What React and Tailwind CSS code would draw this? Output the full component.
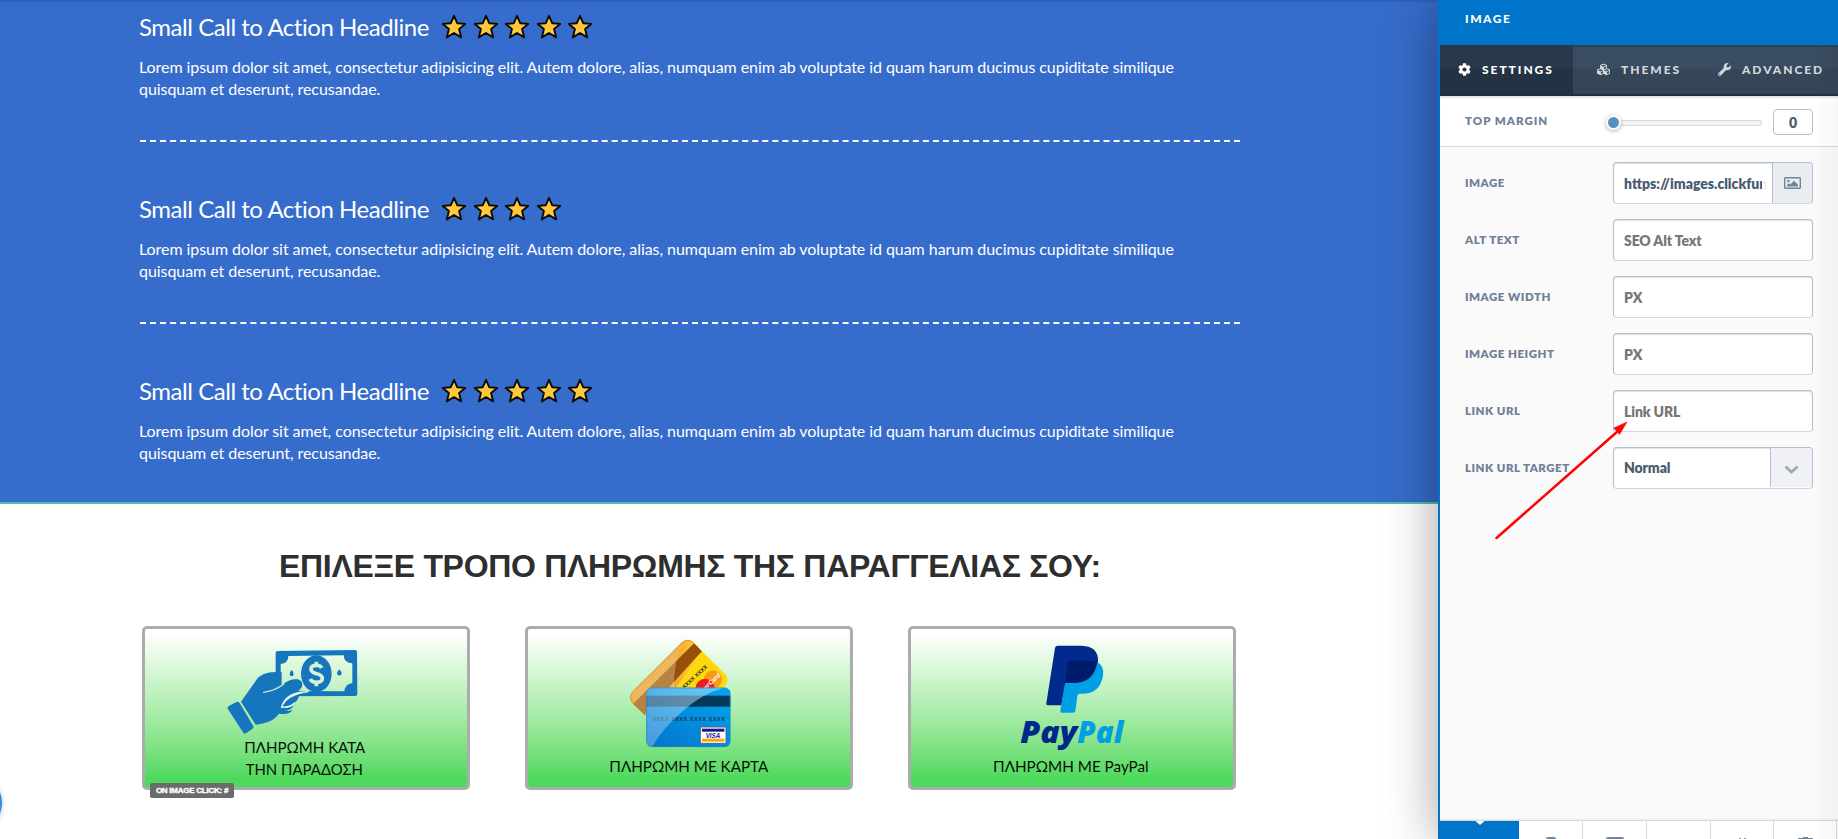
import { FaCog, FaCubes, FaWrench } from "react-icons/fa";

const LOREM =
  "Lorem ipsum dolor sit amet, consectetur adipisicing elit. Autem dolore, alias, numquam enim ab voluptate id quam harum ducimus cupiditate similique quisquam et deserunt, recusandae.";

function Star() {
  return (
    <svg className="h-[28px] w-[28px]" viewBox="0 0 28 28">
      <path
        d="M14 2.8 L17.2 10.2 L25.2 10.9 L19.1 16 L21.2 24.4 L14 20 L6.8 24.4 L8.9 16 L2.8 10.9 L10.8 10.2 Z"
        fill="#ffc83d"
        stroke="#0b0b0b"
        strokeWidth="1.9"
        strokeLinejoin="round"
      />
    </svg>
  );
}

function Review({ stars, last }) {
  return (
    <div className={last ? "h-[138px]" : "h-[182px]"}>
      <div className="flex h-[46px] items-center">
        <h3 className="-ml-px w-[301px] whitespace-nowrap pb-px text-[24px] leading-[30px] tracking-[-0.46px]">Small Call to Action Headline</h3>
        <div className="flex gap-[3.6px]">
          {Array.from({ length: stars }, (_, i) => (
            <Star key={i} />
          ))}
        </div>
      </div>
      <p className="-ml-px mt-[6px] w-[1060px] text-[16px] leading-[22px] tracking-[-0.058px]">{LOREM}</p>
      {!last && <div className="mt-[40px] border-t-2 border-dashed border-white" />}
    </div>
  );
}

function Card({ children }) {
  return (
    <div className="relative h-[164px] w-[328px] rounded-[5px] border-[3px] border-[#acacac] bg-linear-to-b from-white from-2% to-[#4dd95c] to-95%">
      <svg className="absolute -left-[3px] -top-[3px] h-[164px] w-[328px]" viewBox="0 0 984 492">
        {children}
      </svg>
    </div>
  );
}

function Caption({ x, y, w, children }) {
  return (
    <text x={x} y={y} textLength={w} lengthAdjust="spacingAndGlyphs" fontSize="46" className="font-['Lato','Open_Sans',sans-serif]" fill="#071207">
      {children}
    </text>
  );
}

function CashArt() {
  return (
    <g transform="translate(-37 -46)">
      <g fill="#1576be">
        <path fillRule="evenodd" d="M444 121 L676 118 Q682 118 682 124 L683 250 Q683 256 677 256 L444 257 Q438 257 438 251 L438 127 Q438 121 444 121 Z M476 136 Q476 158 453 160 L454 241 L644 242 Q646 220 668 217 L668 158 Q643 157 642 134 Z" />
        <ellipse cx="560" cy="189" rx="46" ry="55" />
        <path d="M486 178 Q494 186 492 192 Q486 202 480 192 Q478 186 486 178Z M629 176 Q637 184 636 190 Q629 199 622 190 Q621 184 629 176Z" />
        <path d="M302 284 L320 274 Q326 271 330 277 L371 347 Q373 351 369 354 L350 367 Q345 371 341 366 L294 294 Q292 289 302 284Z" />
        <path d="M334 273 L380 208 Q396 184 438 184 L456 184 L456 236 L500 246 L508 256 Q503 275 484 284 Q460 292 440 318 Q424 336 378 342 Z" />
        <path d="M450 293 Q482 294 492 283 Q488 297 468 301 Q486 300 488 297 Q482 314 446 309 Q453 304 450 293Z" />
      </g>
      <path d="M402 243 Q438 240 465 217 Q483 203 505 206 Q522 212 517 228 Q507 247 475 252 Q465 265 455 290 L400 270 Z" fill="#1576be" />
      <path d="M402 245 Q438 240 462 220" fill="none" stroke="#c6eec8" strokeWidth="4" strokeLinecap="round" />
      <path d="M455 291 Q470 251 536 243 L512 245 Q466 251 455 291 M456 290 Q485 290 495 276" fill="none" stroke="#ecfaec" strokeWidth="4" />
      <path d="M576 172 Q573 164 560 164 Q544 164 544 175 Q544 185 561 189 Q578 193 578 203 Q578 215 560 215 Q546 215 542 205 M560 153 L560 166 M560 213 L560 227" fill="none" stroke="#d4f3d4" strokeWidth="11" />
    </g>
  );
}

function CreditArt() {
  return (
    <g transform="translate(-30 -46)">
      <defs>
        <linearGradient id="gold" x1="0" y1="0" x2="1" y2="0">
          <stop offset="0" stopColor="#f0a03a" />
          <stop offset="0.55" stopColor="#fbbf2c" />
          <stop offset="1" stopColor="#ffe600" />
        </linearGradient>
        <linearGradient id="blue" x1="0" y1="1" x2="1" y2="0">
          <stop offset="0" stopColor="#0573c9" />
          <stop offset="1" stopColor="#00a6f0" />
        </linearGradient>
        <linearGradient id="gloss" x1="0" y1="1" x2="1" y2="0">
          <stop offset="0" stopColor="#a5d4f5" stopOpacity="0.4" />
          <stop offset="1" stopColor="#c8e6fb" stopOpacity="0.55" />
        </linearGradient>
        <clipPath id="goldClip">
          <path d="M502 95 Q518 82 536 96 L630 190 Q643 205 634 220 L620 240 L440 340 L391 314 L352 276 Q341 260 352 245 Z" />
        </clipPath>
      </defs>
      <g clipPath="url(#goldClip)">
        <rect x="340" y="80" width="310" height="270" fill="#ffd90d" />
        <path d="M340 80 L506 80 Q470 150 474 235 L474 340 L340 340Z" fill="#f5a93b" />
        <path d="M480 80 L530 80 L560 125 L480 235 L474 340 Z" fill="url(#gold)" />
        <path d="M538 97 L561 122 L385 314 L354 280 Z" fill="#97500b" />
        <path d="M340 80 L508 80 Q474 150 476 250 L340 340Z" fill="#e5c78e" opacity="0.42" />
        <circle cx="594" cy="206" r="27" fill="#f99b12" />
        <circle cx="570" cy="232" r="28" fill="#ef1c1c" />
        <text transform="translate(573 237) rotate(-43)" fontSize="19" fontWeight="700" fontStyle="italic" fill="#fff" className="font-['Liberation_Sans',sans-serif]">erCard</text>
        <text transform="translate(508 235) rotate(-43)" fontSize="21" fontWeight="700" textLength="96" fill="#3a3c2c" className="font-['Liberation_Sans',sans-serif]">xxxx xxxx</text>
      </g>
      <path d="M502 95 Q518 82 536 96 M502 95 L352 245 Q341 260 352 276 L391 314" fill="none" stroke="#b97622" strokeWidth="2" />
      <rect x="394" y="231" width="252" height="178" rx="17" fill="url(#blue)" />
      <rect x="394" y="255" width="252" height="33" fill="#04395c" />
      <text x="413" y="331" fontSize="19" fontWeight="700" textLength="216" fill="#1c3c54" className="font-['Liberation_Sans',sans-serif]">xxxx xxxx xxxx xxxx</text>
      <path d="M411 231 L627 231 Q560 250 507 298 Q445 350 411 409 Q394 408 394 392 L394 248 Q394 231 411 231Z" fill="url(#gloss)" />
      <rect x="395" y="232" width="250" height="176" rx="16" fill="none" stroke="#2588c4" strokeWidth="2" />
      <rect x="556" y="349" width="77" height="49" fill="#fff" stroke="#5a666c" strokeWidth="3" />
      <rect x="561" y="354" width="67" height="9" fill="#14178c" />
      <rect x="561" y="384" width="67" height="9" fill="#f9a413" />
      <text x="572" y="381" fontSize="21" fontWeight="700" fontStyle="italic" textLength="44" lengthAdjust="spacingAndGlyphs" fill="#14178c" className="font-['Liberation_Sans',sans-serif]">VISA</text>
    </g>
  );
}

function PaypalArt() {
  return (
    <g transform="translate(-39 -46)">
      <path d="M489 105 L560 105 Q611 107 609 152 Q604 213 545 217 L512 217 L499 284 L458 284 Q453 284 454 278 L480 112 Q481 105 489 105Z" fill="#002a8c" />
      <path d="M606 154 Q629 165 624 196 Q614 248 566 249 L555 249 Q548 249 547 256 L541 300 Q540 306 534 306 L501 306 Q495 306 496 300 L509 222 Q510 216 516 216 L545 216 Q594 212 606 154Z" fill="#009ee3" />
      <path d="M527 150 L580 150 Q596 150 607 154 Q596 214 545 216 L510 216 L519 157 Q520 150 527 150Z" fill="#001a6c" />
      <text y="396" fontSize="91" fontWeight="800" fontStyle="italic" className="font-['Open_Sans',sans-serif]">
        <tspan x="376" textLength="171" lengthAdjust="spacingAndGlyphs" fill="#00288a">Pay</tspan>
        <tspan x="547" textLength="138" lengthAdjust="spacingAndGlyphs" fill="#009ee3">Pal</tspan>
      </text>
    </g>
  );
}

function Canvas() {
  return (
    <main className="h-[839px] w-[1438px] shrink-0 overflow-hidden bg-white font-['Lato',sans-serif]">
      <section className="h-[504px] border-b-2 border-[#55bda5] bg-[#366ccc] pl-[140px] pr-[198px] pt-[4px] text-white shadow-[inset_0_4px_3px_-3px_rgba(0,0,0,0.2)]">
        <Review stars={5} />
        <Review stars={4} />
        <Review stars={5} last />
      </section>
      <h2 className="ml-[279px] mt-[43px] whitespace-nowrap font-['Liberation_Sans',sans-serif] text-[32px] font-bold leading-[38px] tracking-[-0.31px] text-[#2e2e2e]">
        ΕΠΙΛΕΞΕ ΤΡΟΠΟ ΠΛΗΡΩΜΗΣ ΤΗΣ ΠΑΡΑΓΓΕΛΙΑΣ ΣΟΥ:
      </h2>
      <div className="ml-[142px] mt-[41px] flex gap-[55px]">
        <div className="relative">
          <Card>
            <CashArt />
            <Caption x={307} y={382} w={363}>ΠΛΗΡΩΜΗ ΚΑΤΑ</Caption>
            <Caption x={311} y={446} w={352}>ΤΗΝ ΠΑΡΑΔΟΣΗ</Caption>
          </Card>
          <span className="absolute left-[8px] top-[157px] flex h-[15px] w-[84px] items-center justify-center whitespace-nowrap rounded-[2px] bg-[#6b6b6b] font-['Liberation_Sans',sans-serif] text-[8px] font-bold tracking-[-0.25px] text-white [-webkit-text-stroke:0.4px_white]">
            ON IMAGE CLICK: #
          </span>
        </div>
        <Card>
          <CreditArt />
          <Caption x={253} y={437} w={477}>ΠΛΗΡΩΜΗ ΜΕ ΚΑΡΤΑ</Caption>
        </Card>
        <Card>
          <PaypalArt />
          <Caption x={255} y={437} w={467}>ΠΛΗΡΩΜΗ ΜΕ PayPal</Caption>
        </Card>
      </div>
    </main>
  );
}

function Field({ label, children }) {
  return (
    <div className="flex h-[42px]">
      <span className="w-[148px] shrink-0 whitespace-nowrap pt-[11.5px] text-[11.5px] font-extrabold leading-[17px] tracking-[0.5px] text-[#718096]">{label}</span>
      {children}
    </div>
  );
}

const box = "h-[42px] w-[200px] rounded-[4px] border border-[#b3bed0] border-b-[#cfd7e4] bg-white shadow-[inset_0_1px_1px_rgba(60,80,110,0.18)]";

function Input({ text }) {
  return <div className={box + " pl-[10px] text-[14px] font-extrabold leading-[41px] tracking-[-0.1px] text-[#777]"}>{text}</div>;
}

function Panel() {
  return (
    <aside className="relative flex h-[839px] w-[400px] flex-col border-l-2 border-[#0074c8] bg-[#fafafa] font-['Lato',sans-serif] shadow-[0_0_50px_rgba(0,0,0,0.38)]">
      <header className="h-[45px] shrink-0 bg-[#0074c8] pl-[25px] text-[12px] font-black leading-[38px] tracking-[1.5px] text-white">IMAGE</header>
      <nav className="flex h-[51px] shrink-0 border-b-2 border-[#22303e] bg-linear-to-b from-[#3a4c61] from-50% to-[#354659] to-50% text-[12px] font-black tracking-[1.95px] text-[#d4d8dd] shadow-[inset_0_2px_1px_rgba(0,0,0,0.12)]">
        <div className="flex w-[133px] items-center bg-linear-to-b from-[#29394b] from-50% to-[#243343] to-50% pl-[18px] text-white">
          <FaCog className="mr-[11px] h-[13px] w-[13px]" />
          SETTINGS
        </div>
        <div className="flex w-[121px] items-center pl-[24px]">
          <FaCubes className="mr-[11px] h-[13px] w-[13px]" />
          THEMES
        </div>
        <div className="flex items-center pl-[24px]">
          <FaWrench className="mr-[11px] h-[13px] w-[13px]" />
          ADVANCED
        </div>
      </nav>
      <div className="flex h-[51px] shrink-0 border-b border-[#d8dcde] bg-white pl-[25px] shadow-[inset_0_2px_1px_rgba(0,0,0,0.1)]">
        <span className="w-[148px] pt-[16px] text-[11.5px] font-extrabold leading-[17px] tracking-[1px] text-[#718096]">TOP MARGIN</span>
        <div className="relative mt-[24px] h-[6px] w-[149px] rounded-[2px] border border-[#dadada] bg-[#f3f3f3]">
          <span className="absolute -left-[8px] -top-[6px] h-[15px] w-[15px] rounded-full border-2 border-white bg-[#5592bf] shadow-[0_1px_4px_rgba(0,0,0,0.3)]" />
        </div>
        <div className="ml-[11px] mt-[13px] h-[26px] w-[40px] rounded-[4px] border border-[#b3bed0] text-center text-[14px] font-extrabold leading-[25px] text-[#4a5c70]">0</div>
      </div>
      <div className="flex flex-1 flex-col gap-[15px] pl-[25px] pt-[15px]">
        <Field label="IMAGE">
          <div className={box + " flex"}>
            <span className="relative w-[158px] whitespace-nowrap pl-[10px] text-[14px] font-extrabold leading-[41px] text-[#4a5c70]">
              https://images.clickfun
              <span className="absolute bottom-px right-0 top-px w-[10px] bg-white/90" />
            </span>
            <span className="flex flex-1 items-center justify-center rounded-r-[3px] border-l border-[#b3bed0] bg-[#e9edf1]">
              <svg className="h-[12px] w-[17px]" viewBox="0 0 17 12" fill="#74859a">
                <rect x="0.7" y="0.7" width="15.6" height="10.6" rx="0.8" fill="none" stroke="#74859a" strokeWidth="1.4" />
                <circle cx="4.4" cy="4" r="1.3" />
                <path d="M3 9.5 V8 L5 6.3 L6.3 7.5 L10 3.8 L14 7.6 V9.5 Z" />
              </svg>
            </span>
          </div>
        </Field>
        <Field label="ALT TEXT"><Input text="SEO Alt Text" /></Field>
        <Field label="IMAGE WIDTH"><Input text="PX" /></Field>
        <Field label="IMAGE HEIGHT"><Input text="PX" /></Field>
        <Field label="LINK URL"><Input text="Link URL" /></Field>
        <Field label="LINK URL TARGET">
          <div className={box + " flex overflow-hidden"}>
            <span className="w-[156px] pl-[10px] text-[14px] font-extrabold leading-[39px] tracking-[-0.1px] text-[#4a5c70]">Normal</span>
            <span className="mb-px flex flex-1 items-center justify-center border-l border-[#b3bed0] bg-[#eff1f6] pt-[3px]">
              <svg className="h-[9px] w-[15px]" viewBox="0 0 15 9">
                <path d="M1.5 1.5 L7.5 7 L13.5 1.5" fill="none" stroke="#9fabb7" strokeWidth="2.8" />
              </svg>
            </span>
          </div>
        </Field>
      </div>
      <footer className="flex h-[19px] shrink-0 overflow-hidden border-t border-[#d5d6d8] bg-white shadow-[0_-1px_2px_rgba(0,0,0,0.06)]">
        <div className="flex w-[79px] justify-center bg-[#0074c8]">
          <svg className="h-[4px] w-[10px]" viewBox="0 0 10 4"><path d="M0.5 0 H9.5 L5 4Z" fill="#fff" /></svg>
        </div>
        <div className="flex w-[64px] justify-center border-r border-[#d8d9db] pt-[16px]"><span className="h-[12px] w-[10px] rounded-[2px] border-2 border-[#74859a]" /></div>
        <div className="flex w-[64px] justify-center border-r border-[#d8d9db] pt-[16px]"><span className="h-[12px] w-[18px] rounded-[2px] bg-[#74859a]" /></div>
        <div className="w-[64px] border-r border-[#d8d9db]" />
        <div className="flex w-[63px] justify-center gap-[3px] border-r border-[#d8d9db] pt-[17px]"><span className="h-[5px] w-[2px] bg-[#8c9aab]" /><span className="h-[5px] w-[2px] bg-[#8c9aab]" /></div>
        <div className="flex w-[63px] justify-center border-r border-[#d8d9db] pt-[16px]">
          <svg className="h-[6px] w-[15px]" viewBox="0 0 15 6" fill="#74859a"><path d="M5 0 H10 V1 H15 V6 H0 V1 H5Z" /></svg>
        </div>
      </footer>
      <div className="pointer-events-none absolute bottom-0 right-0 top-[45px] w-[20px] bg-linear-to-r from-black/[0.01] to-black/[0.03]" />
    </aside>
  );
}

export default function App() {
  return (
    <div className="relative flex h-[839px] w-[1838px] overflow-hidden">
      <Canvas />
      <Panel />
      <span className="absolute -left-[58px] top-[773px] h-[60px] w-[60px] rounded-full bg-[#2f87f0] shadow-[0_1px_5px_rgba(0,0,0,0.25)]" />
      <svg className="pointer-events-none absolute left-[1490px] top-[415px] h-[130px] w-[150px]" viewBox="0 0 150 130">
        <path d="M6.5 123 L128 16" stroke="#fb0505" strokeWidth="2.5" strokeLinecap="round" />
        <path d="M137 7 L129.5 19.5 L127 16.5 L123.8 13 Z" fill="#fb0505" stroke="#fb0505" strokeWidth="0.6" />
      </svg>
    </div>
  );
}
